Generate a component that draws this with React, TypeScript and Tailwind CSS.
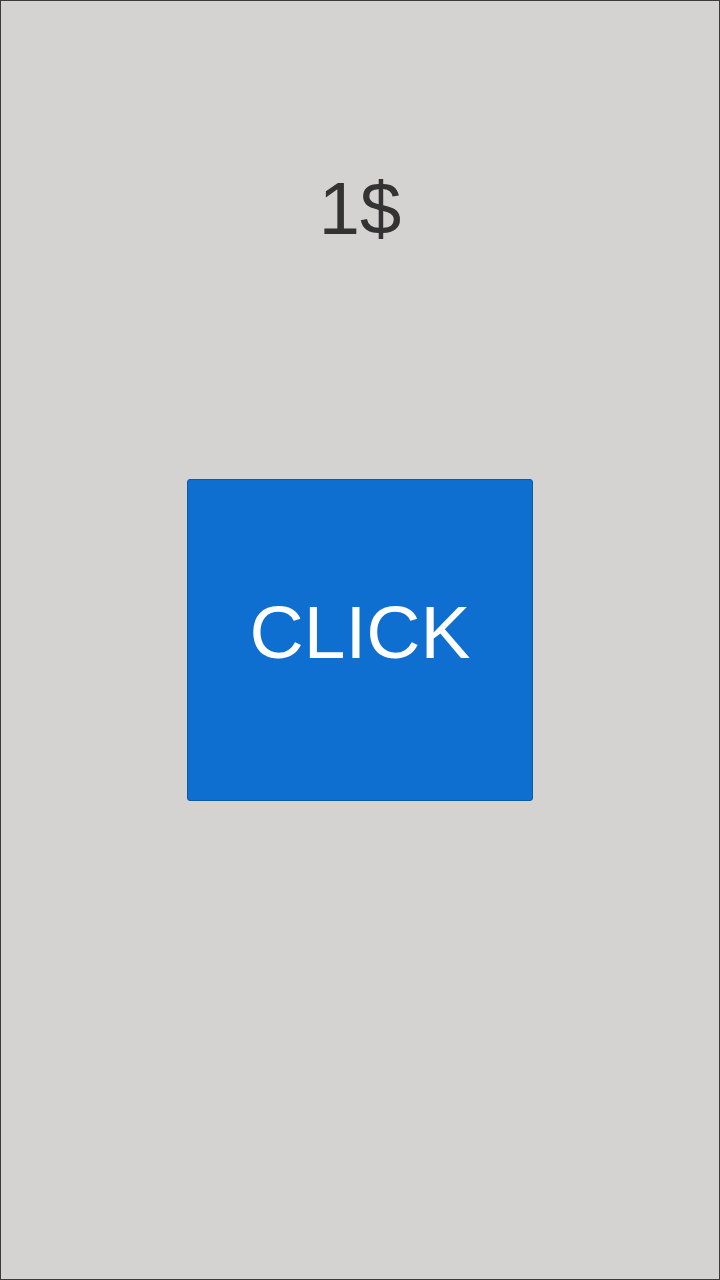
export default function App() {
  return (
    <div
      className="flex h-[1280px] w-full flex-col items-center border border-[#3a3a3a] bg-[#d4d3d2] pt-[171px]"
      style={{ fontFamily: '"Liberation Sans", Arial, sans-serif' }}
    >
      <div className="text-[74px] leading-none text-[#333333]">1$</div>
      <button className="mt-[233px] flex h-[322px] w-[346px] items-center justify-center rounded-[3px] border border-[#0b5aa8] bg-[#0e6fd1] pb-[16px] text-[75px] leading-none text-white">
        CLICK
      </button>
    </div>
  )
}
